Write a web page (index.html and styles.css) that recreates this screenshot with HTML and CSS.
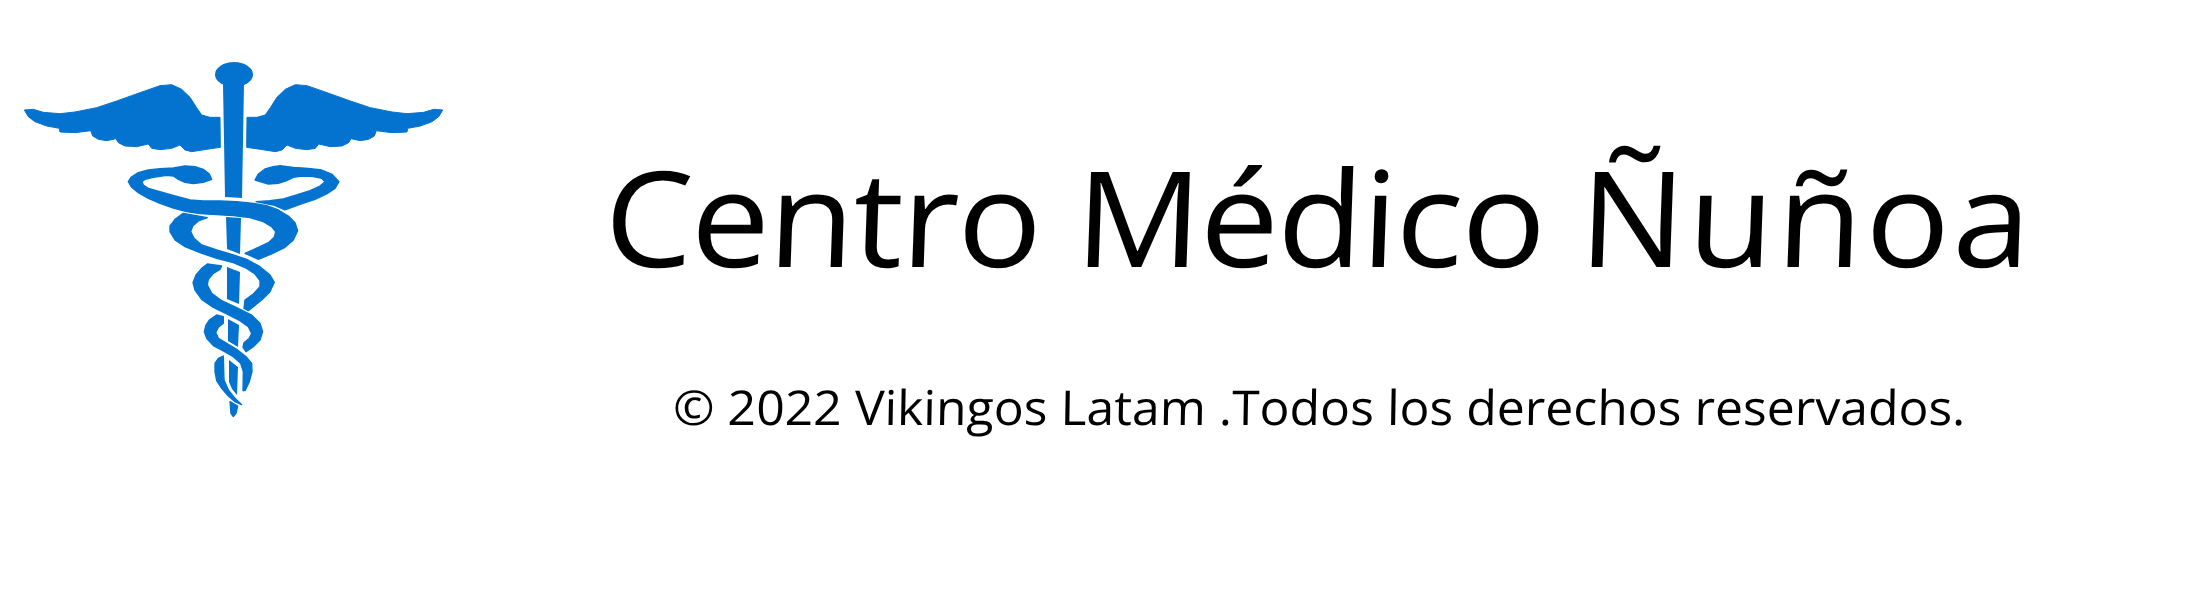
FILE: index.html
```html
<!DOCTYPE html>
<html lang="es">
<head>
  <meta charset="UTF-8">
  <title>Centro Médico Ñuñoa</title>
  <meta name="viewport" content="width=device-width, initial-scale=1.0">
  <link rel="stylesheet" href="styles.css">
</head>
<body>

  <!-- Logo -->
  <svg class="logo" viewBox="0 0 470 596" aria-hidden="true">
    <!-- staff -->
    <ellipse cx="234" cy="74.5" rx="19" ry="12.5"/>
    <path d="M223 84H244L242 198L225 197Z"/>
    <path d="M226 217L241 218L240 254L227 249Z"/>
    <path d="M227 267L240 272L239 304L227 299Z"/>
    <path d="M228 319L239 325L238 347L228 341Z"/>
    <path d="M229 360L238 367L237 395L232 389L229 382Z"/>
    <!-- wings -->
    <g class="wings" transform="translate(0 40) scale(.33333)">
      <polygon id="wing" points="73,210 100,208 130,217 180,221 225,216 290,203 350,183 420,158 480,137 515,134 545,148 570,172 590,203 605,225 630,232 660,232 661,322 620,328 575,335 555,330 540,315 515,325 480,329 455,325 445,312 410,320 375,318 355,308 348,296 320,302 295,298 278,288 272,272 225,278 180,276 178,265 140,258 105,245 85,230"/>
      <use href="#wing" transform="translate(1401 0) scale(-1 1)"/>
    </g>
    <!-- snakes -->
    <g class="snakes" transform="translate(120 150) scale(.33333)">
      <polygon points="275,88 268,72 250,58 225,50 195,48 160,54 120,56 85,60 55,68 33,82 25,95 35,112 55,128 85,145 120,160 160,174 200,185 240,191 290,194 340,197 390,203 430,215 455,230 467,245 463,262 445,278 415,292 375,310 415,328 455,312 495,292 520,270 533,242 525,218 505,198 475,180 440,167 400,160 350,155 300,153 250,153 210,150 165,138 120,125 85,115 70,105 66,95 75,88 100,82 140,76 160,78 175,88 195,97 220,101 250,97"/>
      <polygon points="405,90 415,72 435,57 460,50 480,47 520,52 565,55 605,60 635,72 657,95 645,115 620,132 585,148 540,163 495,180 460,165 408,155 450,152 490,147 530,135 570,122 600,108 615,95 605,85 580,80 545,78 520,82 500,92 475,100 445,102"/>
      <polygon points="190,190 262,203 235,213 218,228 212,245 222,265 245,285 290,300 335,313 380,328 420,350 450,375 463,397 450,425 425,450 385,482 372,475 375,450 400,432 420,410 420,392 405,372 380,355 340,338 290,325 240,308 195,290 165,270 150,245 150,228 165,208"/>
      <polygon points="262,342 305,348 300,358 280,370 265,388 262,405 275,430 305,452 350,473 395,495 420,520 428,545 420,570 400,590 378,605 369,592 372,578 388,565 395,550 385,530 360,512 320,492 280,472 245,448 225,420 219,398 228,375 245,355"/>
      <polygon points="290,495 310,500 310,520 295,532 287,547 295,565 320,580 350,598 380,622 395,640 396,665 388,695 375,722 369,722 370,665 362,640 340,620 310,603 280,587 260,565 253,545 258,525 268,510"/>
      <polygon points="310,618 312,690 325,720 345,745 365,764 345,755 325,738 305,715 290,692 285,665 285,640 295,625"/>
      <polygon points="330,755 353,768 348,790 340,800 333,790"/>
    </g>
  </svg>

  <!-- Texto -->
  <div class="main">
    <h1 class="title">Centro Médico <span class="last-word">Ñuñoa</span></h1>
    <p class="copy">© 2022 Vikingos Latam .Todos los derechos reservados.</p>
  </div>

</body>
</html>
```

FILE: styles.css
```css
* { box-sizing: border-box; margin: 0; padding: 0; }

body {
  font-family: 'Open Sans', 'Noto Sans', sans-serif;
  background: #fff;
  color: #000;
  height: 100vh;
  display: flex;
  overflow: hidden;
}

.logo {
  width: 470px;
  height: 596px;
  flex-shrink: 0;
  fill: #0373cf;
}

.wings, .snakes {
  stroke: #0373cf;
  stroke-linejoin: round;
}

.wings {
  stroke-width: 3;
}

.snakes {
  stroke-width: 4;
}

.main {
  flex: 1;
  min-width: 0;
  display: flex;
  flex-direction: column;
  align-items: center;
  padding: 126px 38px 0 0;
}

.title {
  font-size: 133px;
  font-weight: 400;
  line-height: 180px;
  letter-spacing: -1.4px;
  white-space: nowrap;
  transform: skewX(-2deg) scaleX(1.055);
}

.last-word {
  letter-spacing: 2.7px;
}

.copy {
  font-size: 48px;
  line-height: 64px;
  margin-top: 69px;
  white-space: nowrap;
  transform: skewX(-1deg) scaleX(1.04);
}
```
